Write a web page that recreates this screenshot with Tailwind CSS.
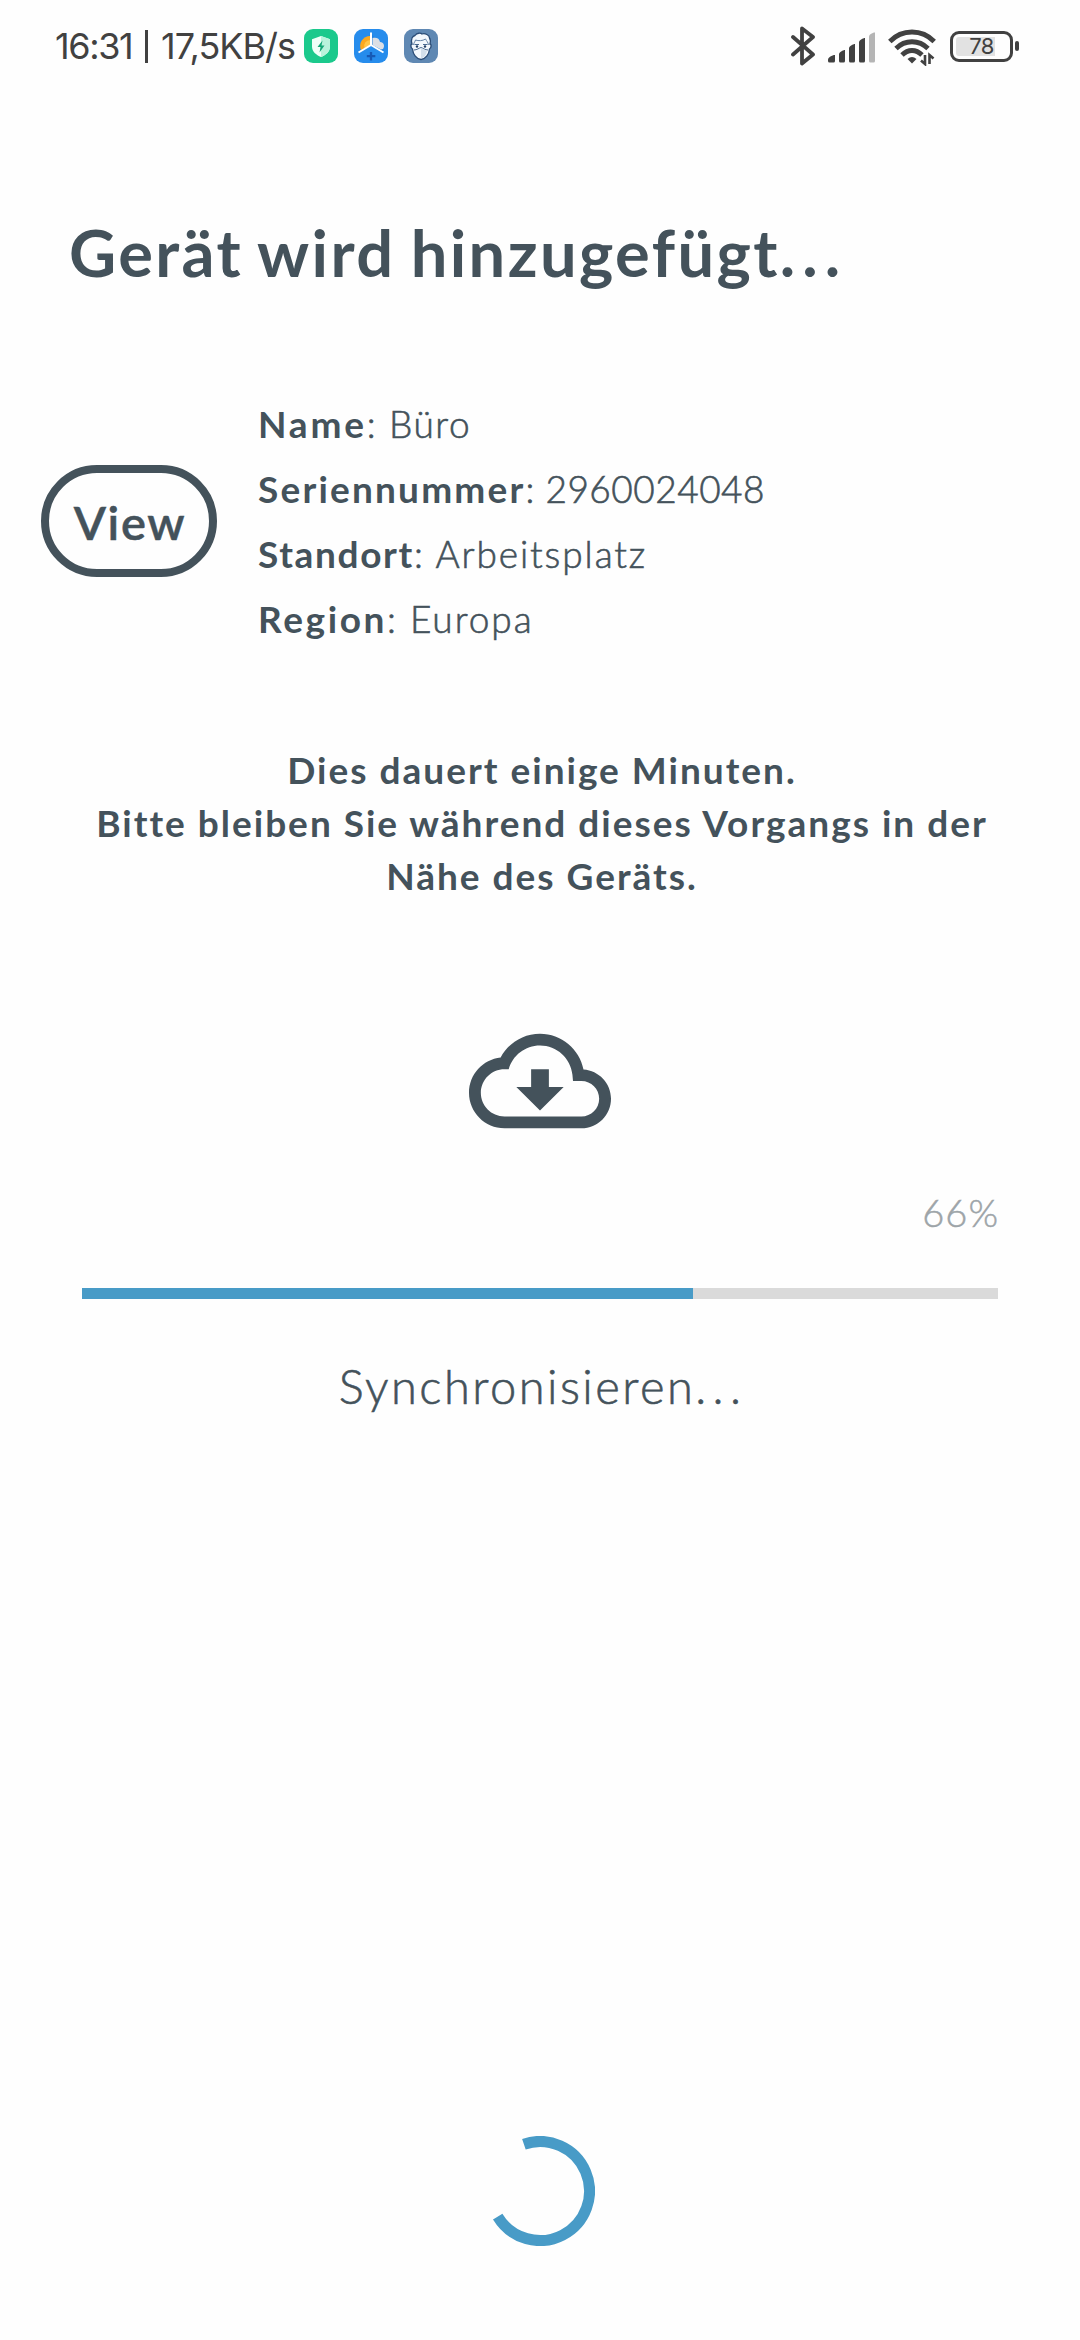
<!DOCTYPE html>
<html lang="de">
<head>
<meta charset="utf-8">
<title>Gerät wird hinzugefügt</title>
<script src="https://cdn.jsdelivr.net/npm/@tailwindcss/browser@4"></script>
</head>
<body class="bg-[#fefefe]">
<div class="w-[1080px] h-[2340px] overflow-hidden flex flex-col bg-[#fefefe] text-[#44525b] font-['Lato',sans-serif]">

  <!-- status bar -->
  <header class="h-[92px] flex justify-between items-center text-[#414141] font-['Inter',sans-serif] shrink-0">
    <div class="flex items-center pl-[55px] text-[36px] leading-[44px] whitespace-nowrap">
      <span class="w-[90px] tracking-[-1.4px]">16:31</span>
      <span class="w-[3px] h-[33px] bg-[#414141] mr-[13px]"></span>
      <span class="w-[143px] tracking-[-1px]">17,5KB/s</span>
      <!-- security -->
      <svg class="w-[34px] h-[34px] mr-4" viewBox="0 0 34 34">
        <rect width="34" height="34" rx="9" fill="#1bc98c"/>
        <path d="M17 7l9 3.3v7.2c0 5-4 8.500-9 10.500-5-2-9-5.500-9-10.500v-7.200z" fill="#effff8"/>
        <path d="M17 7l9 3.300v7.200c0 5-4 8.500-9 10.500z" fill="#b9f3dc"/>
        <path d="M18.500 11.500l-5 6.500h3l-1 5.500 5-7h-3z" fill="#14a877"/>
      </svg>
      <!-- weather widget -->
      <svg class="w-[34px] h-[34px] mr-4" viewBox="0 0 34 34">
        <rect width="34" height="34" rx="9" fill="#268cec"/>
        <path d="M17 4L4 24v-2l13-5 13 5z" fill="#1a78d8" opacity=".5"/>
        <path d="M16 7a10 10 0 0 0-9 14L16 16z" fill="#fba81f"/>
        <path d="M16 11a6 6 0 0 0-5.500 8L16 16z" fill="#ffc64a"/>
        <path d="M18.500 9c4-1 7 .5 7.500 4 4 0 5 4 3 7l-2 .5-8.500-4.500z" fill="#dcdfe5"/>
        <path d="M17 3.500V16L4.500 23.500M17 16l12.500 7.500" fill="none" stroke="#fff" stroke-width="2"/>
        <path d="M17 23v8.500M12.800 27.200h8.500" stroke="#1659b5" stroke-width="2.300"/>
      </svg>
      <!-- masked face -->
      <svg class="w-[34px] h-[34px]" viewBox="0 0 34 34">
        <rect width="34" height="34" rx="9" fill="#5f88b3"/>
        <path d="M8 15c-1.500-5 .5-8 3-8.500 2-3 6-2.500 7-1.500 3-1 7.500 1 7.500 4 1.500 2 1 4 .5 6 1.500 0 1.500 4-.5 5-.5 5-3.500 10-8.500 10.500C12 30 9 25 8.500 20c-2-1-2-5-.5-5z" fill="#f3f8fd" stroke="#2a4c76" stroke-width="1.300"/>
        <path d="M9.500 16c.5-3 1.500-3 2-5 3 1 7 1 10-1 1 2 2.500 3 3 6" fill="none" stroke="#6483a6" stroke-width="1"/>
        <path d="M10 21c3 0 5-2 7-2.500 2 .5 4 2.500 7 2.500M10.500 15.500h4.500M19 15.500h4.500" fill="none" stroke="#4a6a90" stroke-width="1"/>
        <circle cx="13" cy="17.500" r="1.200" fill="#223f66"/><circle cx="21" cy="17.500" r="1.200" fill="#223f66"/>
        <path d="M17 19l6 3c-1 4-3 6.500-6 7.500z" fill="#d3dfeb"/>
      </svg>
    </div>
    <div class="flex items-center pr-[61px]">
      <svg class="w-[28px] h-[40px] mr-[11px]" viewBox="0 0 28 40" fill="none" stroke="#414141" stroke-width="3.800" stroke-linejoin="round" stroke-linecap="round"><path d="M4 11l20 17.500-11 9V2.500l11 8.500L4 28.500"/></svg>
      <svg class="w-[50px] h-[40px] mr-[10px]" viewBox="0 0 50 40" fill="#414141">
        <path d="M0 33.500c0-2 4-4.500 7-4.500v6q0 1.500-1.500 1.500h-4Q0 36.500 0 35z"/>
        <path d="M11 28c0-1.500 4-4 6-4v11q0 1.500-1.500 1.500h-3Q11 36.500 11 35z"/>
        <path d="M21 22c0-1.500 4-4 6-4v17q0 1.500-1.500 1.500h-3Q21 36.500 21 35z"/>
        <path d="M31 16c0-1.500 4-4 6-4v23q0 1.500-1.500 1.500h-3Q31 36.500 31 35z"/>
        <path d="M41 10.500c0-2 4-4 6-4V35q0 1.500-1.500 1.500h-3Q41 36.500 41 35z" fill="#b5b5b5"/>
      </svg>
      <svg class="w-[48px] h-[40px] mr-[14px]" viewBox="0 0 48 40" fill="none" stroke="#414141">
        <path d="M1.800 15.500C14 2.800 34 2.800 46.200 15.500" stroke-width="4.800"/>
        <path d="M8 22.500C17 13.500 31 13.500 40 22.500" stroke-width="4.800"/>
        <path d="M14 29C20 23 28 23 34 29" stroke-width="4.800"/>
        <path d="M24 37.500l-4.500-4.500q4.500-4 9 0z" fill="#414141" stroke="none"/>
        <path d="M37 29v9l-4-3.500M41.500 38v-9l4 3.500" stroke-width="2.600"/>
      </svg>
      <div class="flex items-center">
        <div class="w-[63px] h-[31px] border-[3px] border-[#414141] rounded-[9px] p-[3px] relative">
          <div class="w-[39px] h-full bg-[#e2e2e2] rounded-l-[3px]"></div>
          <span class="absolute inset-0 text-center text-[22px] leading-[25px] tracking-[-0.500px]">78</span>
        </div>
        <div class="w-1 h-[10px] bg-[#414141] rounded-full ml-0.5"></div>
      </div>
    </div>
  </header>

  <h1 class="mt-[121px] pl-[69px] text-[65px] leading-[78px] h-[78px] font-bold tracking-[2.400px] [word-spacing:-3px] whitespace-nowrap">Gerät wird hinzugefügt<span class="tracking-[7px]">...</span></h1>

  <section class="mt-[100px] flex items-start text-[37px] leading-[65px] whitespace-nowrap">
    <div class="ml-[41px] mt-[74px] w-[176px] h-[112px] border-8 border-[#44525b] rounded-full flex items-center justify-center text-[47px] leading-[56px] font-semibold tracking-[1.700px] pl-[2px] pt-[2px] [-webkit-text-stroke:0.500px]">View</div>
    <div class="ml-[41px] font-light [-webkit-text-stroke:0.600px]">
      <p class="tracking-[1.600px]"><b class="font-bold tracking-[2.800px] [-webkit-text-stroke:0]">Name</b>: Büro</p>
      <p class="tracking-[0.500px]"><b class="font-bold tracking-[2.200px] [-webkit-text-stroke:0]">Seriennummer</b>: 2960024048</p>
      <p class="tracking-[1.900px]"><b class="font-bold tracking-[1.650px] [-webkit-text-stroke:0]">Standort</b>: Arbeitsplatz</p>
      <p class="tracking-[2px]"><b class="font-bold tracking-[2.600px] [-webkit-text-stroke:0]">Region</b>: Europa</p>
    </div>
  </section>

  <p class="mt-[92px] text-center text-[37px] leading-[53px] font-bold tracking-[2px] whitespace-nowrap pl-1">Dies dauert einige Minuten.<br>Bitte bleiben Sie während dieses Vorgangs in der<br>Nähe des Geräts.</p>

  <svg class="w-[142px] h-[142px] mt-[108px] self-center" viewBox="0 0 24 24" fill="#44525b">
    <path d="M19.350 10.040C18.670 6.590 15.640 4 12 4 9.110 4 6.600 5.640 5.350 8.040 2.340 8.360 0 10.910 0 14c0 3.310 2.690 6 6 6h13c2.760 0 5-2.240 5-5 0-2.640-2.050-4.780-4.650-4.960zM19 18H6c-2.210 0-4-1.790-4-4s1.790-4 4-4h.710C7.370 7.690 9.480 6 12 6c2.850 0 5.200 2.170 5.480 4.950l.1 1.050H19c1.660 0 3 1.340 3 3s-1.340 3-3 3z"/>
    <path d="M10.500 10v3H8l4 4 4-4h-2.500v-3z"/>
  </svg>

  <p class="mt-[38px] pr-[81px] text-right text-[38px] leading-[44px] font-light text-[#9da4a8] tracking-[1px] [-webkit-text-stroke:0.500px]">66%</p>
  <div class="mt-[54px] mx-[82px] h-[11px] bg-[#dadada]"><div class="h-full bg-[#489bc7]" style="width:66.7%"></div></div>
  <p class="mt-[59px] text-center text-[47px] leading-[56px] font-light tracking-[2.450px] pl-[6px] [-webkit-text-stroke:0.600px]">Synchronisieren<span class="tracking-[6.400px]">...</span></p>

  <svg class="mt-[722px] w-[110px] h-[110px] self-center" viewBox="-55 -55 110 110" fill="none" stroke="#489bc7" stroke-width="11"><path d="M-16.100 -46.800A49.500 49.500 0 1 1 -42.300 25.700"/></svg>
</div>
</body>
</html>
